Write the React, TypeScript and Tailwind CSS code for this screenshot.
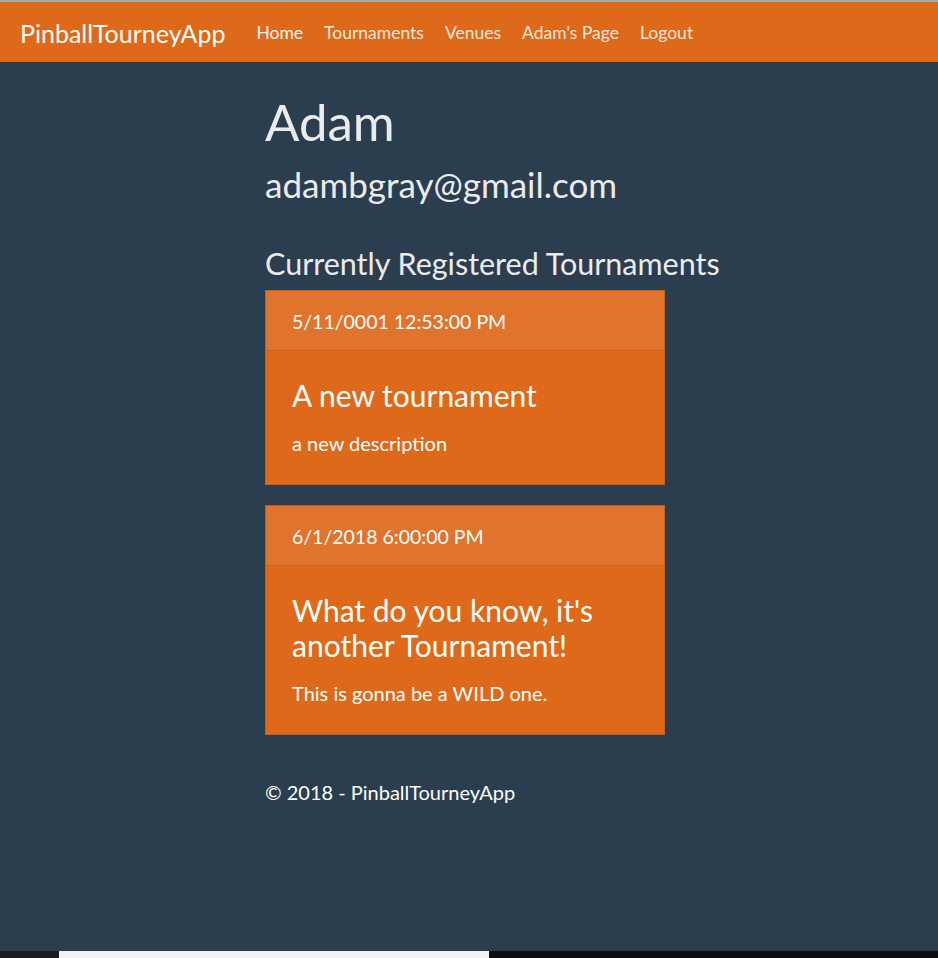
export default function App() {
  const cards = [
    { date: "5/11/0001 12:53:00 PM", title: "A new tournament", desc: "a new description" },
    { date: "6/1/2018 6:00:00 PM", title: "What do you know, it's another Tournament!", desc: "This is gonna be a WILD one." },
  ];
  return (
    <div className="w-[938px] h-[958px] overflow-hidden bg-[#2b3e50] flex flex-col" style={{ fontFamily: "Lato, 'Open Sans', sans-serif" }}>
      <div className="h-[2px] bg-[#a8a8a8] shrink-0" />
      <nav className="h-[60px] pt-[3px] bg-[#df691a] flex items-center shrink-0">
        <span className="ml-[20px] text-[25px] text-white">PinballTourneyApp</span>
        <div className="ml-[31px] flex gap-[21px] text-[17.5px] text-[#f3e6dd]">
          <span className="text-white">Home</span>
          <span>Tournaments</span>
          <span>Venues</span>
          <span>Adam's Page</span>
          <span>Logout</span>
        </div>
      </nav>
      <main className="flex-1 pl-[265px] text-[#ebebeb]">
        <h1 className="text-[51px] leading-none mt-[34px]">Adam</h1>
        <h2 className="text-[35px] leading-none mt-[20px]">adambgray@gmail.com</h2>
        <h3 className="text-[30.5px] leading-none mt-[46px]">Currently Registered Tournaments</h3>
        <div className="mt-[11px] flex flex-col gap-[20px]">
          {cards.map((c) => (
            <div key={c.date} className="w-[400px] border border-[#c85f18] bg-[#df691a] text-white">
              <div className="h-[60px] pt-[4px] flex items-center px-[26px] bg-[#e1742d] border-b border-[#c9621c] text-[19.5px]">
                {c.date}
              </div>
              <div className="px-[26px] pt-[27px] pb-[27px]">
                <div className="text-[30px] leading-[35px]">{c.title}</div>
                <div className="text-[20px] leading-[27px] mt-[17px]">{c.desc}</div>
              </div>
            </div>
          ))}
        </div>
        <div className="mt-[21px] h-px bg-[#26384a]" />
        <div className="mt-[22px] text-[20px] leading-[27px] text-white">© 2018 - PinballTourneyApp</div>
      </main>
      <div className="h-[7px] flex shrink-0">
        <div className="w-[59px] bg-[#1c1c1c]" />
        <div className="w-[430px] bg-[#f2f2f2]" />
        <div className="flex-1 bg-[#0e0e0e]" />
      </div>
    </div>
  );
}
